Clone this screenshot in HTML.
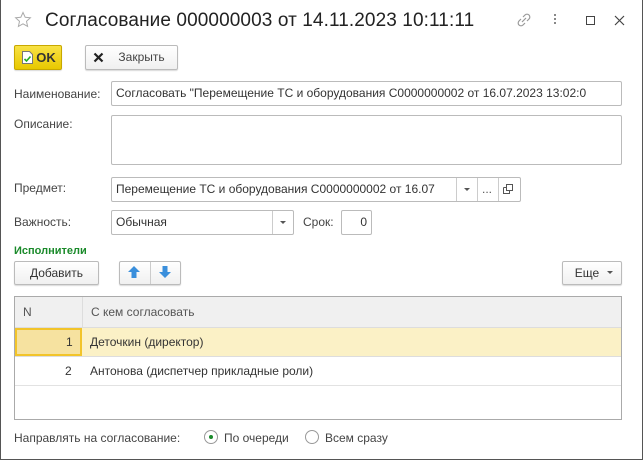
<!DOCTYPE html>
<html><head><meta charset="utf-8"><style>
*{box-sizing:border-box;margin:0;padding:0}
body{width:643px;height:460px;overflow:hidden;background:#fff;font-family:"Liberation Sans",sans-serif;font-size:12px;color:#333;position:relative}
.win{position:absolute;left:0;top:0;width:643px;height:460px;border:1px solid #555;border-top:none}
.a{position:absolute}
.lbl{position:absolute;color:#444;font-size:12px}
.inp{position:absolute;border:1px solid #bbb;border-radius:2px;background:#fff;padding-left:4px;line-height:23px;white-space:nowrap;overflow:hidden;color:#333}
.btn{position:absolute;border:1px solid #bbb;border-radius:2px;background:linear-gradient(#fff,#f0f0f0);box-shadow:0 1px 1px rgba(0,0,0,.15);text-align:center;color:#333}
</style></head><body>
<div class="win"></div>
<svg class="a" style="left:14px;top:11px" width="18" height="18" viewBox="0 0 18 18"><path d="M9 1.5l2.2 4.8 5.2.5-3.9 3.5 1.1 5.1L9 12.8l-4.6 2.6 1.1-5.1L1.6 6.8l5.2-.5z" fill="none" stroke="#aaa" stroke-width="1"/></svg>
<div class="a" style="left:45px;top:10px;font-size:19px;color:#222;letter-spacing:0.1px">Согласование 000000003 от 14.11.2023 10:11:11</div>
<svg class="a" style="left:515px;top:11px" width="18" height="18" viewBox="0 0 18 18"><g fill="none" stroke="#999" stroke-width="1.2"><path d="M7 11l4-4"/><path d="M8 6l2-2a2.5 2.5 0 0 1 4 4l-2 2"/><path d="M10 12l-2 2a2.5 2.5 0 0 1-4-4l2-2"/></g></svg>
<div class="a" style="left:554px;top:14px;width:2px;height:2px;background:#888;box-shadow:0 4px #888,0 8px #888"></div>
<div class="a" style="left:586px;top:16px;width:9px;height:9px;border:1px solid #444"></div>
<svg class="a" style="left:614px;top:15px" width="11" height="11"><path d="M1 1l9 9M10 1l-9 9" stroke="#444" stroke-width="1.2"/></svg>

<div class="btn" style="left:14px;top:45px;width:48px;height:25px;background:linear-gradient(#f8e244,#e8c800);border-color:#c8a800;font-weight:bold;font-size:13px;line-height:23px;padding-left:16px;color:#333">OK</div>
<svg class="a" style="left:22px;top:51px" width="11" height="13"><path d="M.5.5h7l3 3v9h-10z" fill="#fff" stroke="#777"/><path d="M2.5 8l2 2 4-4.5" stroke="#2a2" stroke-width="1.6" fill="none"/></svg>
<div class="btn" style="left:85px;top:45px;width:93px;height:25px;line-height:23px;padding-left:20px;color:#444">Закрыть</div>
<svg class="a" style="left:93px;top:52px" width="11" height="11"><path d="M1.5 1.5l8 8M9.5 1.5l-8 8" stroke="#222" stroke-width="2.2"/></svg>

<div class="lbl" style="left:14px;top:87px">Наименование:</div>
<div class="inp" style="left:111px;top:81px;width:511px;height:25px">Согласовать "Перемещение ТС и оборудования С0000000002 от 16.07.2023 13:02:0</div>
<div class="lbl" style="left:14px;top:117px">Описание:</div>
<div class="inp" style="left:111px;top:115px;width:511px;height:50px"></div>
<div class="lbl" style="left:14px;top:181px">Предмет:</div>
<div class="inp" style="left:111px;top:177px;width:410px;height:25px">Перемещение ТС и оборудования С0000000002 от 16.07</div>
<div class="a" style="left:456px;top:178px;width:1px;height:23px;background:#ccc"></div>
<div class="a" style="left:477px;top:178px;width:1px;height:23px;background:#ccc"></div>
<div class="a" style="left:498px;top:178px;width:1px;height:23px;background:#ccc"></div>
<div class="a" style="left:464px;top:188px;border:3px solid transparent;border-top:3px solid #555"></div>
<div class="a" style="left:482px;top:182px;color:#555">...</div>
<svg class="a" style="left:503px;top:184px" width="11" height="11"><path d="M3.5.5h6v6h-6zM.5 3.5h3M.5 3.5v6h6v-3" fill="none" stroke="#555"/></svg>

<div class="lbl" style="left:14px;top:215px">Важность:</div>
<div class="inp" style="left:111px;top:210px;width:183px;height:25px">Обычная</div>
<div class="a" style="left:272px;top:211px;width:1px;height:23px;background:#ccc"></div>
<div class="a" style="left:280px;top:221px;border:3px solid transparent;border-top:3px solid #555"></div>
<div class="lbl" style="left:303px;top:215px">Срок:</div>
<div class="inp" style="left:341px;top:210px;width:31px;height:25px;text-align:right;padding-right:4px">0</div>

<div class="a" style="left:14px;top:245px;color:#1a8a2a;font-weight:bold;font-size:11px">Исполнители</div>
<div class="btn" style="left:14px;top:261px;width:85px;height:24px;line-height:22px">Добавить</div>
<div class="btn" style="left:119px;top:261px;width:62px;height:24px"></div>
<div class="a" style="left:150px;top:262px;width:1px;height:22px;background:#ccc"></div>
<svg class="a" style="left:127px;top:265px" width="14" height="14"><path d="M7 1l6 6H9.5v6h-5V7H1z" fill="#3a8fdc"/></svg>
<svg class="a" style="left:158px;top:265px" width="14" height="14"><path d="M7 13l6-6H9.5V1h-5v6H1z" fill="#3a8fdc"/></svg>
<div class="btn" style="left:562px;top:261px;width:60px;height:24px;line-height:22px;padding-right:10px">Еще</div>
<div class="a" style="left:607px;top:271px;border:3px solid transparent;border-top:3px solid #555"></div>

<div class="a" style="left:14px;top:296px;width:608px;height:124px;border:1px solid #aaa"></div>
<div class="a" style="left:15px;top:297px;width:606px;height:31px;background:#f0f0f0;border-bottom:1px solid #ddd"></div>
<div class="a" style="left:82px;top:297px;width:1px;height:31px;background:#ddd"></div>
<div class="lbl" style="left:23px;top:305px;color:#555">N</div>
<div class="lbl" style="left:91px;top:305px;color:#555">С кем согласовать</div>
<div class="a" style="left:15px;top:328px;width:606px;height:29px;background:#fbf1c6;border-bottom:1px solid #ddd"></div>
<div class="a" style="left:15px;top:328px;width:67px;height:28px;background:#f6e2a0;border:2px solid #f2c42a"></div>
<div class="a" style="left:66px;top:335px;color:#333">1</div>
<div class="a" style="left:90px;top:335px;color:#333">Деточкин (директор)</div>
<div class="a" style="left:15px;top:357px;width:606px;height:29px;border-bottom:1px solid #e2e2e2"></div>
<div class="a" style="left:65px;top:364px;color:#333">2</div>
<div class="a" style="left:90px;top:364px;color:#333">Антонова (диспетчер прикладные роли)</div>

<div class="lbl" style="left:14px;top:431px">Направлять на согласование:</div>
<div class="a" style="left:204px;top:430px;width:14px;height:14px;border:1px solid #999;border-radius:50%"></div>
<div class="a" style="left:209px;top:435px;width:4px;height:4px;background:#1a8a2a;border-radius:50%"></div>
<div class="lbl" style="left:224px;top:431px">По очереди</div>
<div class="a" style="left:305px;top:430px;width:14px;height:14px;border:1px solid #999;border-radius:50%"></div>
<div class="lbl" style="left:325px;top:431px">Всем сразу</div>
</body></html>
